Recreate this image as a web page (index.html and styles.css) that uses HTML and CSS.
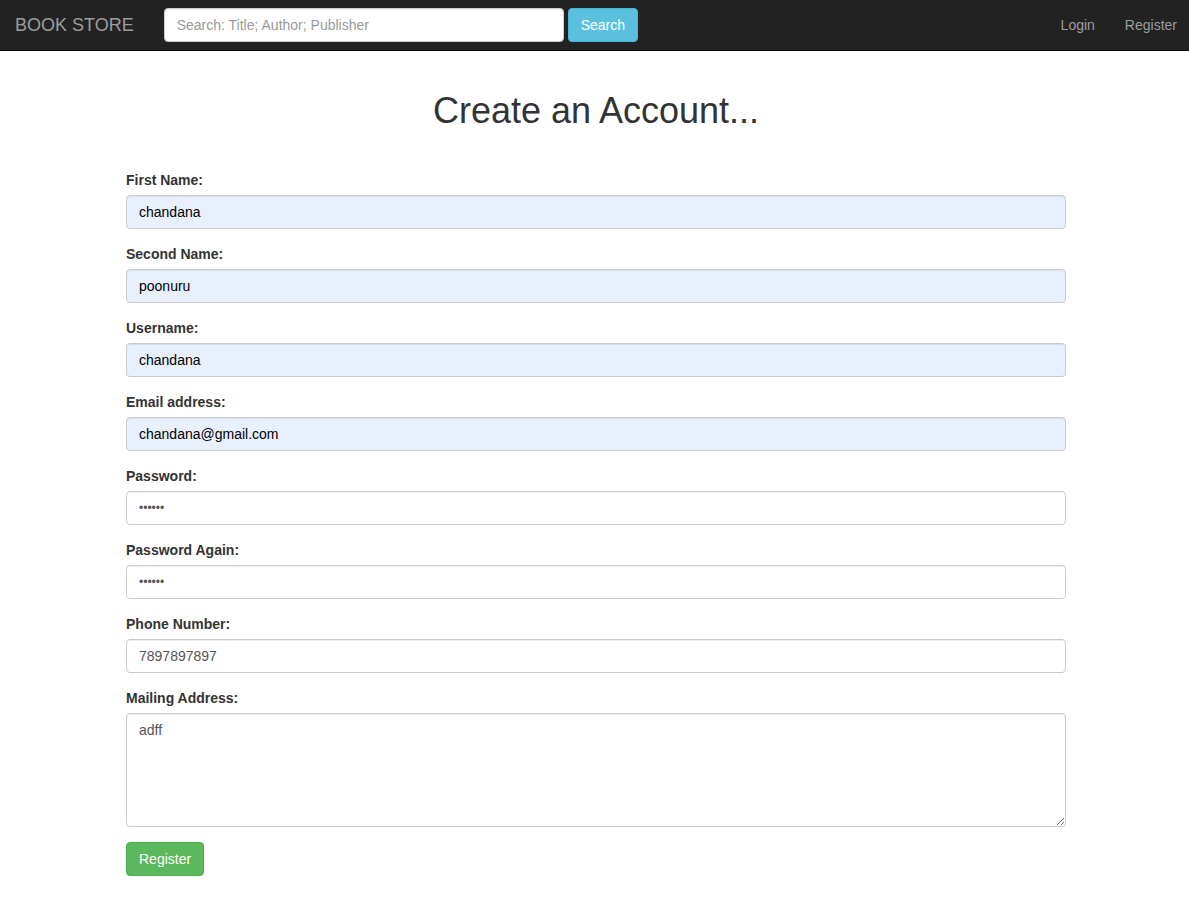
FILE: index.html
```html
<!DOCTYPE html>
<html>
<head>
<meta charset="utf-8">
<title>Book Store - Register</title>
<link rel="stylesheet" href="styles.css">
</head>
<body>
<nav class="navbar">
  <a class="brand" href="#">BOOK STORE</a>
  <form class="search">
    <input class="search-input" type="text" placeholder="Search: Title; Author; Publisher">
    <button class="btn btn-info" type="button">Search</button>
  </form>
  <div class="nav-right">
    <a class="nav-link" href="#">Login</a>
    <a class="nav-link nav-last" href="#">Register</a>
  </div>
</nav>
<main class="main">
  <h1 class="title">Create an Account...</h1>
  <form class="reg-form">
    <div class="group">
      <label class="label">First Name:</label>
      <input class="control filled" type="text" value="chandana">
    </div>
    <div class="group">
      <label class="label">Second Name:</label>
      <input class="control filled" type="text" value="poonuru">
    </div>
    <div class="group">
      <label class="label">Username:</label>
      <input class="control filled" type="text" value="chandana">
    </div>
    <div class="group">
      <label class="label">Email address:</label>
      <input class="control filled" type="text" value="chandana@gmail.com">
    </div>
    <div class="group">
      <label class="label">Password:</label>
      <input class="control pw" type="password" value="123456">
    </div>
    <div class="group">
      <label class="label">Password Again:</label>
      <input class="control pw" type="password" value="123456">
    </div>
    <div class="group">
      <label class="label">Phone Number:</label>
      <input class="control" type="text" value="7897897897">
    </div>
    <div class="group">
      <label class="label">Mailing Address:</label>
      <textarea class="control area" rows="5">adff</textarea>
    </div>
    <button class="btn btn-success" type="button">Register</button>
  </form>
</main>
</body>
</html>
```
FILE: styles.css
```css
* { box-sizing: border-box; }
html, body { margin: 0; padding: 0; }
body {
  font-family: "Liberation Sans", Arial, Helvetica, sans-serif;
  font-size: 14px;
  line-height: 20px;
  color: #333;
  background: #fff;
}
.navbar {
  height: 51px;
  background: #222;
  border-bottom: 1px solid #080808;
  display: flex;
  align-items: center;
  padding-left: 15px;
}
.brand {
  font-size: 18px;
  color: #9d9d9d;
  text-decoration: none;
  line-height: 20px;
  margin-right: 30px;
}
.search {
  display: flex;
  align-items: center;
  gap: 4px;
  margin: 0;
}
.search-input {
  width: 400px;
  height: 34px;
  padding: 6px 12px;
  font-family: inherit;
  font-size: 14px;
  color: #555;
  background: #fff;
  border: 1px solid #ccc;
  border-radius: 4px;
  box-shadow: inset 0 1px 1px rgba(0,0,0,.075);
}
.search-input::placeholder { color: #999; }
.btn {
  height: 34px;
  padding: 6px 12px;
  font-family: inherit;
  font-size: 14px;
  line-height: 20px;
  color: #fff;
  border: 1px solid transparent;
  border-radius: 4px;
  cursor: pointer;
}
.btn-info { background: #5bc0de; border-color: #46b8da; width: 70px; }
.btn-success { background: #5cb85c; border-color: #4cae4c; width: 78px; }
.nav-right {
  margin-left: auto;
  display: flex;
}
.nav-link {
  color: #9d9d9d;
  text-decoration: none;
  padding: 0 15px;
  line-height: 20px;
}
.nav-last { padding-right: 12px; }
.main {
  padding: 0 123px 0 126px;
}
.title {
  margin: 0;
  padding: 40px 0 0;
  font-size: 36px;
  font-weight: 500;
  line-height: 40px;
  height: 119px;
  text-align: center;
  color: #333;
}
.reg-form { margin: 0; padding-bottom: 24px; }
.group { margin-bottom: 15px; }
.label {
  display: block;
  font-weight: bold;
  margin-bottom: 5px;
  line-height: 20px;
}
.control {
  display: block;
  width: 100%;
  height: 34px;
  padding: 6px 12px;
  font-family: inherit;
  font-size: 14px;
  line-height: 20px;
  color: #555;
  background: #fff;
  border: 1px solid #ccc;
  border-radius: 4px;
  box-shadow: inset 0 1px 1px rgba(0,0,0,.075);
}
.filled {
  background: #e8f0fe;
  color: #000;
}
.pw { color: #555; font-size: 12px; }
.area {
  height: 114px;
  resize: vertical;
}
```
